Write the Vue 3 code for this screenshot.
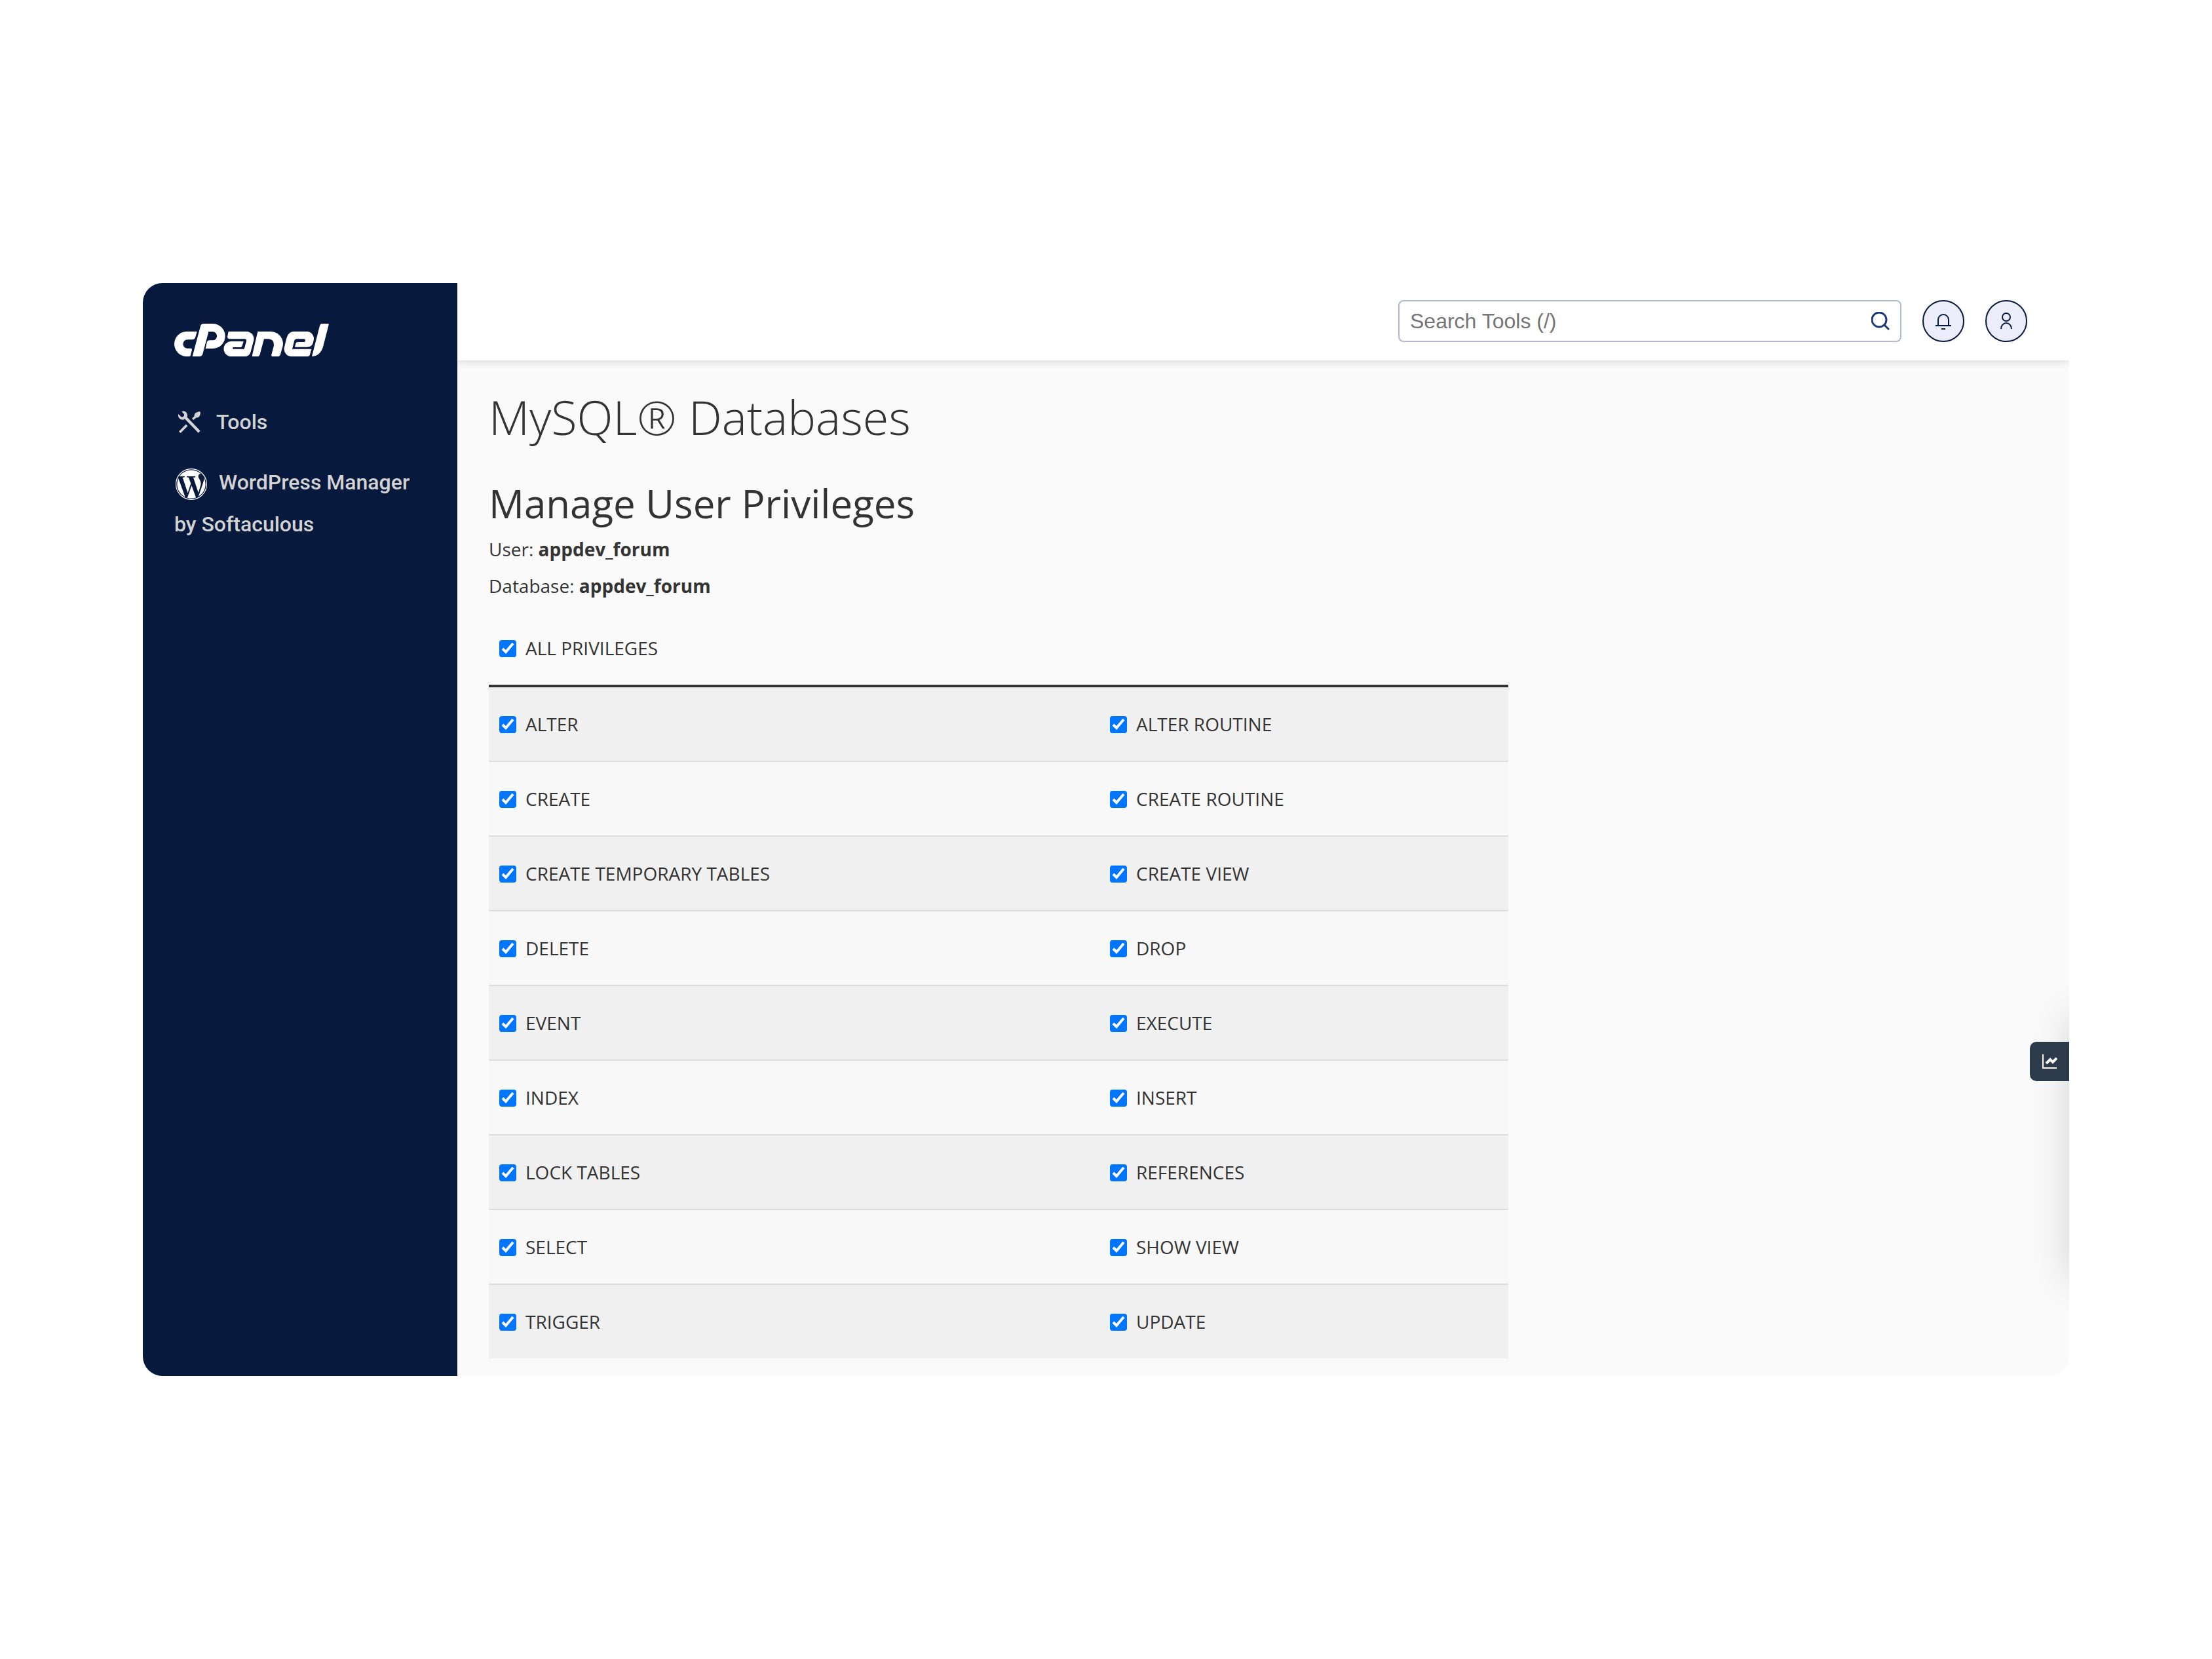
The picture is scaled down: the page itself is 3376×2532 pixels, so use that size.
<script setup>
import { ref, computed } from 'vue'

const search = ref('')
const rows = ref(
  [
    ['ALTER', 'ALTER ROUTINE'],
    ['CREATE', 'CREATE ROUTINE'],
    ['CREATE TEMPORARY TABLES', 'CREATE VIEW'],
    ['DELETE', 'DROP'],
    ['EVENT', 'EXECUTE'],
    ['INDEX', 'INSERT'],
    ['LOCK TABLES', 'REFERENCES'],
    ['SELECT', 'SHOW VIEW'],
    ['TRIGGER', 'UPDATE'],
  ].map((row) => row.map((name) => ({ name, granted: true })))
)

const all = computed({
  get: () => rows.value.flat().every((p) => p.granted),
  set: (value) => rows.value.flat().forEach((p) => (p.granted = value)),
})
</script>

<template>
  <div class="page">
    <div class="app">
      <aside class="sidebar">
        <a class="logo" href="#" aria-label="cPanel home">
          <svg viewBox="48 42 708 150" aria-hidden="true">
            <path d="M104 78H152L145 103Q142 115 130 115H108A20 20 0 0 0 108 155H124Q130 155 129 162L122 188Q121 192 117 192H106A57 57 0 0 1 104 78Z" />
            <path d="M181 42H224A57 57 0 0 1 224 156H191L197 128Q200 118 210 118H224A19 19 0 0 0 224 79H205L178 181Q175 192 163 192H131L168 53Q171 42 181 42Z" />
            <path d="M296 78H377A34 34 0 0 1 412 118L398 170Q392 192 370 192H309A34 34 0 0 1 309 123H365L360 140Q357 150 350 150H316V158H368L378 122Q380 112 370 112H302Q289 112 292 98Z" />
            <path d="M430 78H488A56 56 0 0 1 544 148L534 182Q531 192 522 192H498Q491 192 493 184L503 146Q508 113 478 112H459L440 182Q437 192 429 192H408Q403 192 405 186Z" />
            <path d="M596 78H655A32 32 0 0 1 686 118L684 128Q678 149 656 149H600L603 136Q605 126 616 126H642Q648 126 648 119Q648 112 641 112H610Q600 112 597 122L588 158H676L669 184Q667 192 658 192H585A34 34 0 0 1 551 154L561 112Q570 78 596 78Z" />
            <path d="M724 42H752Q756 42 755 47L730 145Q718 190 678 192L714 52Q717 42 724 42Z" />
          </svg>
        </a>
        <nav class="nav">
          <a class="nav-link tools" href="#">
            <svg class="tools-icon" viewBox="0 0 104 104" aria-hidden="true">
              <path d="M16 2A20 20 0 0 1 41 29L103 93L94 103L31 38A20 20 0 0 1 1 15L14 28Q19 31 24 27Q30 21 27 15Z" />
              <path d="M99 2L104 8Q103 28 91 31L84 32L71 43L64 36L75 25Q75 13 82 9Z" />
              <path d="M36 63L44 71L11 104L3 96Z" />
            </svg>
            Tools
          </a>
          <a class="nav-link" href="#">
            <svg class="wp-icon" viewBox="0 0 24 24" aria-hidden="true">
              <circle cx="12" cy="12" r="11.7" />
              <path d="M21.469 6.825c.84 1.537 1.318 3.3 1.318 5.175 0 3.979-2.156 7.456-5.363 9.325l3.295-9.527c.615-1.54.82-2.771.82-3.864 0-.405-.026-.78-.07-1.11m-7.981.105c.647-.03 1.232-.105 1.232-.105.582-.075.514-.93-.067-.899 0 0-1.755.135-2.88.135-1.064 0-2.85-.15-2.85-.15-.585-.03-.661.855-.075.885 0 0 .54.061 1.125.09l1.68 4.605-2.37 7.08L5.354 6.9c.649-.03 1.234-.1 1.234-.1.585-.075.516-.93-.065-.896 0 0-1.746.138-2.874.138-.2 0-.438-.008-.69-.015C4.911 3.15 8.235 1.215 12 1.215c2.809 0 5.365 1.072 7.286 2.833-.046-.003-.091-.009-.141-.009-1.06 0-1.812.923-1.812 1.914 0 .89.513 1.643 1.06 2.531.411.72.89 1.643.89 2.977 0 .915-.354 1.994-.821 3.479l-1.075 3.585-3.9-11.61.001.014zM12 22.784c-1.059 0-2.081-.153-3.048-.437l3.237-9.406 3.315 9.087c.024.053.05.101.078.149-1.12.393-2.325.609-3.582.609M1.211 12c0-1.564.336-3.05.935-4.39L7.29 21.709C3.694 19.96 1.212 16.271 1.211 12" />
            </svg>
            WordPress Manager by Softaculous
          </a>
        </nav>
      </aside>

      <div class="content">
        <header class="topbar">
          <form class="search" role="search" @submit.prevent>
            <input v-model="search" class="search-input" type="text" placeholder="Search Tools (/)" aria-label="Search Tools" />
            <button class="search-button" type="submit" aria-label="Search">
              <svg viewBox="0 0 28 28" aria-hidden="true">
                <circle cx="12" cy="12" r="11" />
                <path d="M19 19L27 27" />
              </svg>
            </button>
          </form>
          <button class="round" type="button" aria-label="Notifications">
            <svg viewBox="0 0 32 32" aria-hidden="true">
              <path d="M8 23V14A8 8 0 0 1 24 14V23M4 23H28M13 28H19" />
            </svg>
          </button>
          <button class="round" type="button" aria-label="User menu">
            <svg viewBox="0 0 32 32" aria-hidden="true">
              <circle cx="16" cy="10" r="6" />
              <path d="M8 28A8 9 0 0 1 24 28" />
            </svg>
          </button>
        </header>

        <main class="main">
          <h1>MySQL® Databases</h1>
          <h2>Manage User Privileges</h2>
          <p>User: <strong>appdev_forum</strong></p>
          <p>Database: <strong>appdev_forum</strong></p>

          <table class="privileges">
            <colgroup>
              <col class="first" />
              <col />
            </colgroup>
            <thead>
              <tr>
                <th colspan="2">
                  <label><input v-model="all" type="checkbox" />ALL PRIVILEGES</label>
                </th>
              </tr>
            </thead>
            <tbody>
              <tr v-for="row in rows" :key="row[0].name">
                <td v-for="p in row" :key="p.name">
                  <label><input v-model="p.granted" type="checkbox" />{{ p.name }}</label>
                </td>
              </tr>
            </tbody>
          </table>
        </main>
      </div>

      <div class="drawer">
        <button class="drawer-tab" type="button" aria-label="Statistics">
          <svg viewBox="0 0 24 24" aria-hidden="true">
            <path class="axis" d="M2 1V22H23" />
            <path class="trend" d="M7 15L13 9L17 13L23 7" />
          </svg>
        </button>
      </div>
    </div>
  </div>
</template>

<style>
body {
  margin: 0;
  background: #fff;
}
</style>

<style scoped>
.page {
  padding: 432px 218px;
}

.app {
  position: relative;
  display: flex;
  overflow: hidden;
  border-radius: 30px;
  background: #fafafa;
  color: #333;
  font-family: "Open Sans", "Noto Sans", sans-serif;
  font-size: 28px;
}

.sidebar {
  z-index: 1;
  flex: none;
  box-sizing: border-box;
  width: 480px;
  padding: 62px 48px;
  background: #08193e;
}

.logo {
  display: block;
  width: 236px;
  height: 50px;
}

.logo svg {
  display: block;
  width: 100%;
  height: 100%;
  fill: #fff;
}

.nav {
  display: flex;
  flex-direction: column;
  gap: 28px;
  margin-top: 68px;
}

.nav-link {
  color: #d3d3d3;
  font: 500 32px/64px Roboto, sans-serif;
  text-decoration: none;
}

.tools {
  display: flex;
  align-items: center;
  gap: 24px;
  padding-left: 6px;
}

.tools-icon {
  width: 34px;
  height: 34px;
  fill: #d3d3d3;
}

.wp-icon {
  width: 48px;
  height: 48px;
  margin: 0 10px 0 2px;
  vertical-align: middle;
  fill: #fff;
}

.wp-icon circle {
  fill: none;
  stroke: #fff;
  stroke-width: 0.6;
}

.content {
  flex: 1;
  min-width: 0;
}

.topbar {
  display: flex;
  align-items: center;
  justify-content: flex-end;
  gap: 32px;
  box-sizing: border-box;
  height: 118px;
  padding: 0 64px 2px;
  background: #fff;
  box-shadow: 0 2px 12px rgba(0, 0, 0, 0.14);
}

.search {
  display: flex;
  align-items: center;
  box-sizing: border-box;
  width: 768px;
  height: 64px;
  border: 2px solid #afb9cf;
  border-radius: 8px;
  background: #fff;
}

.search-input {
  flex: 1;
  min-width: 0;
  height: 56px;
  padding: 0 16px;
  border: 0;
  outline: 0;
  background: transparent;
  color: #333;
  font: 32px/40px "Liberation Sans", Arial, sans-serif;
}

.search-input::placeholder {
  color: #757575;
  opacity: 1;
}

.search-button {
  display: flex;
  padding: 0 16px;
  border: 0;
  background: transparent;
}

.search-button svg {
  width: 28px;
  height: 28px;
  fill: none;
  stroke: #1b3a75;
  stroke-width: 3;
}

.round {
  display: flex;
  align-items: center;
  justify-content: center;
  box-sizing: border-box;
  width: 64px;
  height: 64px;
  padding: 0;
  border: 2px solid #08193e;
  border-radius: 50%;
  background: #ebedfb;
}

.round svg {
  width: 32px;
  height: 32px;
  fill: none;
  stroke: #08193e;
  stroke-width: 2;
}

.main {
  padding: 38px 48px 27px;
}

h1 {
  margin: 0;
  font-size: 72px;
  font-weight: 300;
  line-height: 96px;
}

h2 {
  margin: 42px 0 0;
  font-size: 60px;
  font-weight: 400;
  line-height: 84px;
}

p {
  margin: 0;
  line-height: 56px;
}

.privileges {
  width: 100%;
  max-width: 1556px;
  margin-top: 11px;
  border-spacing: 0;
  border-collapse: separate;
  table-layout: fixed;
}

.first {
  width: 932px;
}

th,
td {
  height: 112px;
  padding: 0 16px;
  font-weight: 400;
  text-align: left;
}

tbody td {
  border-top: 2px solid #ddd;
  background: #f8f8f8;
}

tbody tr:nth-child(odd) td {
  background: #f0f0f0;
}

tbody tr:first-child td {
  border-top: 4px solid #333;
}

label {
  display: flex;
  align-items: center;
  gap: 14px;
  line-height: 40px;
}

input[type="checkbox"] {
  appearance: none;
  width: 26px;
  height: 26px;
  margin: 2px 0 0;
  border: 2px solid #767676;
  border-radius: 4px;
  background: #fff;
}

input[type="checkbox"]:checked {
  border: 0;
  background: #0075ff url("data:image/svg+xml,%3Csvg xmlns='http://www.w3.org/2000/svg' viewBox='0 0 26 26'%3E%3Cpath d='M5 13L10 18L21 5' fill='none' stroke='%23fff' stroke-width='4'/%3E%3C/svg%3E") center / 26px 26px no-repeat;
}

/* Collapsed statistics drawer: only its tab and shadow reach into the page */
.drawer {
  position: absolute;
  top: 1120px;
  left: 100%;
  width: 400px;
  height: 400px;
  box-shadow: 0 0 56px rgba(0, 0, 0, 0.16);
}

.drawer-tab {
  position: absolute;
  top: 38px;
  right: 100%;
  display: flex;
  align-items: center;
  justify-content: center;
  width: 60px;
  height: 60px;
  padding: 0;
  border: 0;
  border-radius: 10px 0 0 10px;
  background: #2c3a49;
}

.drawer-tab svg {
  width: 24px;
  height: 24px;
  fill: none;
  stroke: #fff;
}

.axis {
  stroke-width: 2;
}

.trend {
  stroke-width: 4;
}
</style>
